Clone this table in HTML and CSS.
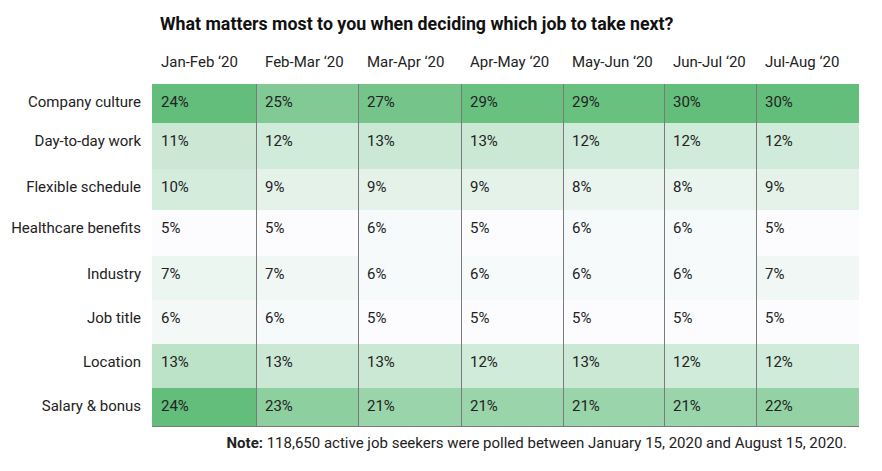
FILE: index.html
```html
<!DOCTYPE html>
<html lang="en">
<head>
<meta charset="utf-8">
<title>What matters most</title>
<link rel="stylesheet" href="styles.css">
</head>
<body>
<div class="chart">
  <h1 class="title">What matters most to you when deciding which job to take next?</h1>
  <div class="row head">
    <div></div>
    <div class="h">Jan-Feb ‘20</div>
    <div class="h">Feb-Mar ‘20</div>
    <div class="h">Mar-Apr ‘20</div>
    <div class="h">Apr-May ‘20</div>
    <div class="h">May-Jun ‘20</div>
    <div class="h">Jun-Jul ‘20</div>
    <div class="h">Jul-Aug ‘20</div>
  </div>
  <div class="row r1">
    <div class="label">Company culture</div>
    <div class="cell first" style="background:#63be7b">24%</div>
    <div class="cell" style="background:#82ca95">25%</div>
    <div class="cell" style="background:#75c58b">27%</div>
    <div class="cell" style="background:#69c180">29%</div>
    <div class="cell" style="background:#69c180">29%</div>
    <div class="cell" style="background:#63be7b">30%</div>
    <div class="cell" style="background:#63be7b">30%</div>
  </div>
  <div class="row r2">
    <div class="label">Day-to-day work</div>
    <div class="cell first" style="background:#cce8d5">11%</div>
    <div class="cell" style="background:#d1ebda">12%</div>
    <div class="cell" style="background:#cbe8d5">13%</div>
    <div class="cell" style="background:#cbe8d5">13%</div>
    <div class="cell" style="background:#d1ebda">12%</div>
    <div class="cell" style="background:#d1ebda">12%</div>
    <div class="cell" style="background:#d1ebda">12%</div>
  </div>
  <div class="row r3">
    <div class="label">Flexible schedule</div>
    <div class="cell first" style="background:#d4ecdc">10%</div>
    <div class="cell" style="background:#e4f2ea">9%</div>
    <div class="cell" style="background:#e4f2ea">9%</div>
    <div class="cell" style="background:#e4f2ea">9%</div>
    <div class="cell" style="background:#eaf5ef">8%</div>
    <div class="cell" style="background:#eaf5ef">8%</div>
    <div class="cell" style="background:#e4f2ea">9%</div>
  </div>
  <div class="row r4">
    <div class="label">Healthcare benefits</div>
    <div class="cell first" style="background:#fcfcff">5%</div>
    <div class="cell" style="background:#fcfcff">5%</div>
    <div class="cell" style="background:#f6fafa">6%</div>
    <div class="cell" style="background:#fcfcff">5%</div>
    <div class="cell" style="background:#f6fafa">6%</div>
    <div class="cell" style="background:#f6fafa">6%</div>
    <div class="cell" style="background:#fcfcff">5%</div>
  </div>
  <div class="row r5">
    <div class="label">Industry</div>
    <div class="cell first" style="background:#ecf6f1">7%</div>
    <div class="cell" style="background:#f0f7f4">7%</div>
    <div class="cell" style="background:#f6fafa">6%</div>
    <div class="cell" style="background:#f6fafa">6%</div>
    <div class="cell" style="background:#f6fafa">6%</div>
    <div class="cell" style="background:#f6fafa">6%</div>
    <div class="cell" style="background:#f0f7f4">7%</div>
  </div>
  <div class="row r6">
    <div class="label">Job title</div>
    <div class="cell first" style="background:#f4f9f8">6%</div>
    <div class="cell" style="background:#f6fafa">6%</div>
    <div class="cell" style="background:#fcfcff">5%</div>
    <div class="cell" style="background:#fcfcff">5%</div>
    <div class="cell" style="background:#fcfcff">5%</div>
    <div class="cell" style="background:#fcfcff">5%</div>
    <div class="cell" style="background:#fcfcff">5%</div>
  </div>
  <div class="row r7">
    <div class="label">Location</div>
    <div class="cell first" style="background:#bce2c7">13%</div>
    <div class="cell" style="background:#cbe8d5">13%</div>
    <div class="cell" style="background:#cbe8d5">13%</div>
    <div class="cell" style="background:#d1ebda">12%</div>
    <div class="cell" style="background:#cbe8d5">13%</div>
    <div class="cell" style="background:#d1ebda">12%</div>
    <div class="cell" style="background:#d1ebda">12%</div>
  </div>
  <div class="row r8">
    <div class="label">Salary &amp; bonus</div>
    <div class="cell first" style="background:#63be7b">24%</div>
    <div class="cell" style="background:#8ecfa0">23%</div>
    <div class="cell" style="background:#9ad4aa">21%</div>
    <div class="cell" style="background:#9ad4aa">21%</div>
    <div class="cell" style="background:#9ad4aa">21%</div>
    <div class="cell" style="background:#9ad4aa">21%</div>
    <div class="cell" style="background:#94d2a5">22%</div>
  </div>
  <p class="note"><b>Note:</b> 118,650 active job seekers were polled between January 15, 2020 and August 15, 2020.</p>
</div>
</body>
</html>
```

FILE: styles.css
```css
html, body {
  margin: 0;
  background: #ffffff;
}

body {
  font-family: Roboto, "Liberation Sans", sans-serif;
  color: #222222;
}

.chart {
  width: 859px;
}

.title {
  margin: 0;
  padding: 14px 0 0 160px;
  font-size: 17.8px;
  line-height: 20px;
  font-weight: 700;
  color: #111111;
}

.row {
  display: grid;
  grid-template-columns: 152px 104px 102px 103px 102px 101px 92px 103px;
  font-size: 15px;
  line-height: 20px;
  box-sizing: border-box;
}

.head {
  height: 50px;
  padding-top: 18px;
}

.head .h {
  padding-left: 9px;
  white-space: nowrap;
}

.label {
  text-align: right;
  padding: 8px 11px 0 0;
  white-space: nowrap;
}

.cell {
  box-sizing: border-box;
  padding: 8px 0 0 8px;
  border-left: 1px solid #7a7a7a;
}

.cell.first {
  border-left: 0;
  padding-left: 9px;
}

.r1 { height: 39px; }
.r2 { height: 46px; }
.r3 { height: 41px; }
.r4 { height: 46px; }
.r5 { height: 44px; }
.r6 { height: 44px; }
.r7 { height: 44px; }
.r8 { height: 39px; }

.r8 .cell {
  border-bottom: 1px solid #7a7a7a;
}

.note {
  margin: 6px 0 0 0;
  padding-right: 12px;
  text-align: right;
  font-size: 15px;
  line-height: 20px;
  color: #222222;
}

.note b {
  font-weight: 700;
}
```
